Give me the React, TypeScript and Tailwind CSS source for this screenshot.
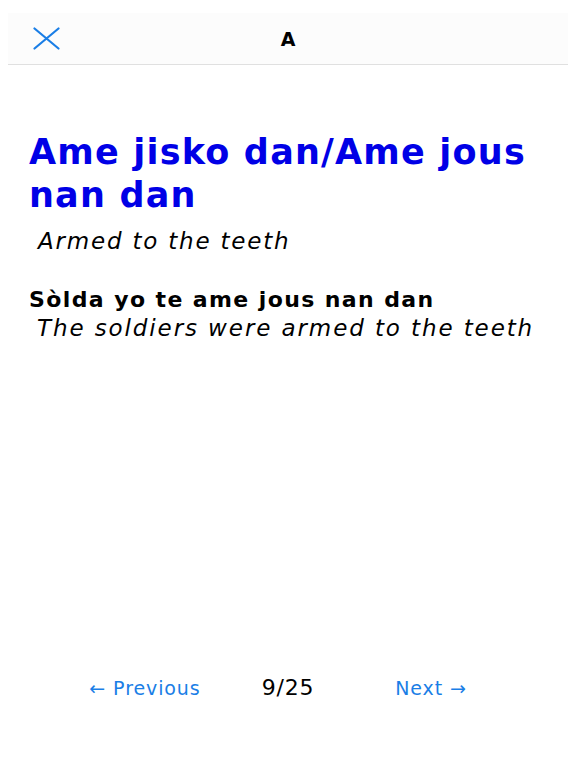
import React from "react";

export default function App() {
  return (
    <div className="h-[768px] w-[576px] bg-white flex flex-col" style={{ fontFamily: "'DejaVu Sans', 'Noto Sans', sans-serif" }}>
      <div className="mt-[13px] mx-2 h-[52px] bg-[#fcfcfc] border-b border-[#e0e0e0] relative flex items-center justify-center">
        <svg className="absolute left-[25px] top-[14px]" width="27" height="23" viewBox="0 0 27 23">
          <path d="M1.5 1.5 L25.5 21.5 M25.5 1.5 L1.5 21.5" stroke="#1a7ee6" strokeWidth="2.2" strokeLinecap="round" fill="none" />
        </svg>
        <span className="text-[19px] leading-[24px] font-bold text-black mt-[1px]">A</span>
      </div>
      <div className="flex-1 px-[29px] pt-[66px]">
        <h1 className="text-[35px] leading-[43px] font-bold text-[#0000e6] tracking-[1.2px]">Ame jisko dan/Ame jous nan dan</h1>
        <p className="mt-[10px] pl-[9px] text-[23px] leading-[28px] italic text-black tracking-[1.8px]">Armed to the teeth</p>
        <p className="mt-[31px] text-[22px] leading-[28px] font-bold text-black tracking-[1.4px]">Sòlda yo te ame jous nan dan</p>
        <p className="pl-[8px] text-[23px] leading-[28px] italic text-black tracking-[1.9px]">The soldiers were armed to the teeth</p>
      </div>
      <div className="flex justify-center items-center pb-[66px]">
        <div className="w-[143px] text-center text-[19px] leading-[28px] text-[#1a7ee6] tracking-[0.9px]">← Previous</div>
        <div className="w-[143px] text-center text-[22px] leading-[28px] text-black tracking-[0.8px]">9/25</div>
        <div className="w-[143px] text-center text-[19px] leading-[28px] text-[#1a7ee6] tracking-[0.9px]">Next →</div>
      </div>
    </div>
  );
}
